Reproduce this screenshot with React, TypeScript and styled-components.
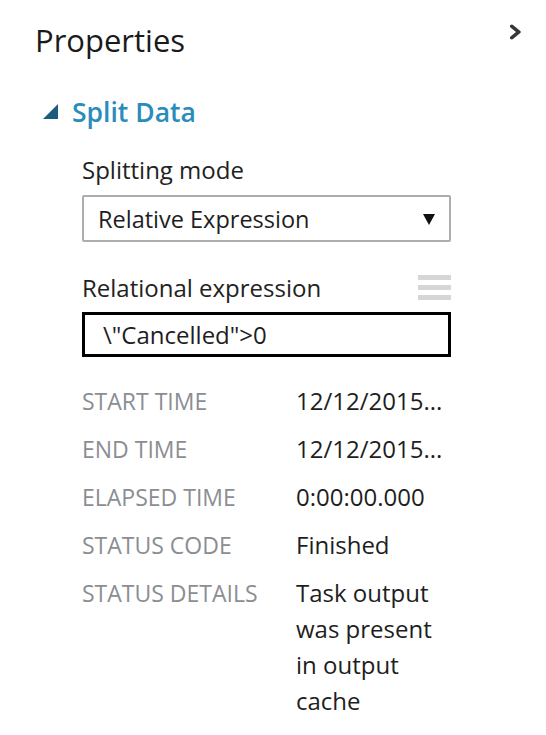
import React from "react";
import styled, { createGlobalStyle } from "styled-components";

const Global = createGlobalStyle`
  html, body { margin: 0; padding: 0; background: #ffffff; }
  body { font-family: "Open Sans", "Noto Sans", sans-serif; color: #1e1e1e; }
`;

const Panel = styled.div`
  width: 546px;
  min-height: 735px;
  box-sizing: border-box;
  display: flex;
  flex-direction: column;
`;

const Header = styled.div`
  display: flex;
  justify-content: space-between;
  align-items: flex-start;
  padding: 20px 24px 0 35px;
`;

const Title = styled.h1`
  margin: 0;
  font-size: 31px;
  line-height: 40px;
  font-weight: 400;
  color: #1a1a1a;
`;

const CollapseButton = styled.button`
  border: 0;
  background: none;
  padding: 0;
  margin-top: 4px;
  width: 14px;
  height: 16px;
  display: flex;
  cursor: pointer;
`;

const SectionHeader = styled.div`
  display: flex;
  align-items: center;
  gap: 13px;
  padding: 34px 0 0 43px;
`;

const SectionTitle = styled.h2`
  margin: 0;
  font-size: 26.5px;
  line-height: 36px;
  font-weight: 600;
  color: #2a8cba;
`;

const Body = styled.div`
  display: flex;
  flex-direction: column;
  width: 369px;
  margin-left: 82px;
  padding-top: 22px;
`;

const FieldLabel = styled.div`
  font-size: 24px;
  line-height: 36px;
  color: #222;
`;

const LabelRow = styled.div<{ $mt?: number }>`
  display: flex;
  justify-content: space-between;
  align-items: flex-start;
  margin-top: ${(p) => p.$mt ?? 0}px;
`;

const Select = styled.div`
  margin-top: 7px;
  height: 47px;
  box-sizing: border-box;
  border: 2px solid #adadad;
  border-radius: 2px;
  display: flex;
  align-items: center;
  justify-content: space-between;
  padding: 0 14px 0 14px;
  font-size: 23.5px;
  line-height: 36px;
  color: #1e1e1e;
`;

const Input = styled.div`
  margin-top: 6px;
  height: 45px;
  box-sizing: border-box;
  border: 3px solid #000;
  display: flex;
  align-items: center;
  padding: 0 0 0 18px;
  font-size: 24px;
  line-height: 36px;
  color: #1e1e1e;
`;

const MenuIcon = styled.div`
  margin-top: 5px;
  width: 33px;
  display: flex;
  flex-direction: column;
  gap: 5px;
`;

const MenuBar = styled.span`
  display: block;
  height: 5px;
  background: #d6d6d6;
`;

const PropGrid = styled.div`
  display: grid;
  grid-template-columns: 214px 1fr;
  row-gap: 12px;
  margin-top: 26px;
  line-height: 36px;
`;

const PropName = styled.div`
  font-size: 23px;
  color: #8a8e93;
  white-space: nowrap;
`;

const PropValue = styled.div`
  font-size: 24px;
  color: #1e1e1e;
  width: 152px;
`;

const rows: [string, string][] = [
  ["START TIME", "12/12/2015..."],
  ["END TIME", "12/12/2015..."],
  ["ELAPSED TIME", "0:00:00.000"],
  ["STATUS CODE", "Finished"],
  ["STATUS DETAILS", "Task output was present in output cache"],
];

export default function App() {
  return (
    <>
      <Global />
      <Panel>
        <Header>
          <Title>Properties</Title>
          <CollapseButton aria-label="Collapse">
            <svg width="14" height="16" viewBox="0 0 14 16">
              <path
                d="M2.2 1.2 Q3.5 0 5 0.9 L12.3 6.9 Q13.5 8 12.3 9.1 L5 15.1 Q3.5 16 2.2 14.8 Q1.3 13.6 2.5 12.6 L8 8 L2.5 3.4 Q1.3 2.4 2.2 1.2 Z"
                fill="#33383d"
              />
            </svg>
          </CollapseButton>
        </Header>
        <SectionHeader>
          <svg width="16" height="16" viewBox="0 0 16 16">
            <polygon points="15,0 15,15 0,15" fill="#1d5c7d" />
          </svg>
          <SectionTitle>Split Data</SectionTitle>
        </SectionHeader>
        <Body>
          <FieldLabel>Splitting mode</FieldLabel>
          <Select>
            <span>Relative Expression</span>
            <svg width="12" height="12" viewBox="0 0 12 12">
              <polygon points="0,1 12,1 6,12" fill="#111" />
            </svg>
          </Select>
          <LabelRow $mt={28}>
            <FieldLabel>Relational expression</FieldLabel>
            <MenuIcon>
              <MenuBar />
              <MenuBar />
              <MenuBar />
            </MenuIcon>
          </LabelRow>
          <Input>\"Cancelled"&gt;0</Input>
          <PropGrid>
            {rows.map(([k, v]) => (
              <React.Fragment key={k}>
                <PropName>{k}</PropName>
                <PropValue>{v}</PropValue>
              </React.Fragment>
            ))}
          </PropGrid>
        </Body>
      </Panel>
    </>
  );
}
